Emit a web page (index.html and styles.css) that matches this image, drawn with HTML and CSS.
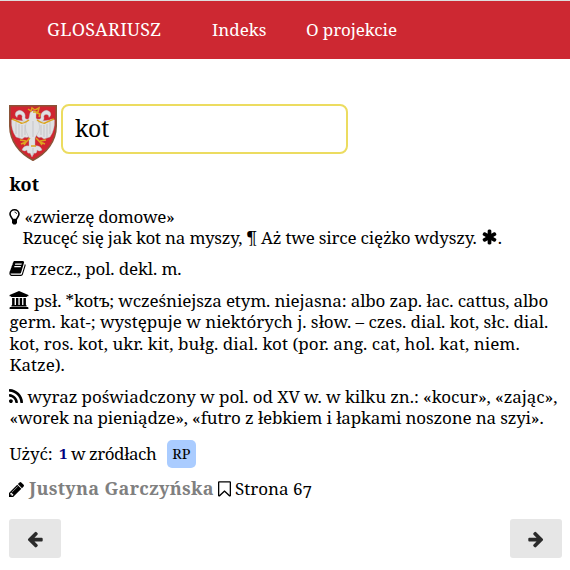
FILE: index.html
```
<!DOCTYPE html>
<html lang="pl">
<head>
<meta charset="utf-8">
<title>Glosariusz – kot</title>
<link rel="stylesheet" href="styles.css">
</head>
<body>
<nav class="nav"><a class="brand">GLOSARIUSZ</a><a class="index">Indeks</a><a class="about">O projekcie</a></nav>
<main>
  <div class="search">
    <svg class="crest" viewBox="0 0 48 56">
      <path d="M.8.8H47.2V21C47 36 38 48 24 55.2 10 48 1 36 .8 21Z" fill="#d12530" stroke="#8a5437" stroke-width="1.6"/>
      <g fill="#e0e1e3" stroke="#b5b5b8" stroke-width=".4">
        <path d="M21 17C17 19 13 17 13 13q1-4-3-3.500-2 .5-2 3Q5 10 7 7q3-3 6-1 4 2 3 7 1 2 5 1v15q-2 5-5 3l-3 2-3-1-3-1Q2 25 2.500 15q2-2 5 0ZM27 17c4 2 8 0 8-4q-1-4 3-3.500 2 .5 2 3 3-2.500 1-5.500-3-3-6-1-4 2-3 7-1 2-5 1v15q2 5 5 3l3 2 3-1 3-1Q46 25 45.500 15q-2-2-5 0Z"/>
        <path d="M21 8q1-3 5-2 2 1 1 4v3q5 6 3 13l-4 7v8q5-1 7 4-3 2-5 0 0 4-3 3l-2 4-2-4q-3 1-3-3-2 2-5 0 2-5 7-4v-8l-3-7q-2-7 3-13Z"/>
      </g>
      <path d="M7 17v12M10 19v14M13 20v12M16 20v10M41 17v12M38 19v14M35 20v12M32 20v10M24 16v16M24 43v7" fill="none" stroke="#b9babd" stroke-width=".7"/>
      <path d="m19 4 3 2 1-3 3 2 4-2-1 4-5 0M27 8l4 1-1 3M3 14q7 3 9 4t8-3M45 14q-7 3-9 4t-8-3M21 33l-4 4-5 2M17 36l-6-1M17 37l-2 3M27 33l4 4 5 2M31 36l6-1M31 37l2 3M22 41h5" fill="none" stroke="#dca51f" stroke-width="1.5"/>
    </svg>
    <input class="query" type="text" value="kot" aria-label="Szukaj">
  </div>

  <h1 class="word">kot</h1>

  <section class="entry">
    <div class="line l1"><svg class="i bulb" viewBox="0 0 11 16"><path d="M3.600 10.600C3.400 8.700 1 7.700 1 5.100a4.500 4.300 0 0 1 9 0c0 2.600-2.400 3.600-2.600 5.500" fill="none" stroke="#000" stroke-width="1.600"/><path d="M5.500 3q1.900.1 2.100 1.900" fill="none" stroke="#000" stroke-width=".8"/><path d="M3 9.800h5v4.100L6.600 15.600H4.400L3 13.900Z"/></svg>«zwierzę domowe»</div>
    <div class="line l2">Rzucęć się jak kot na myszy, ¶ Aż twe sirce ciężko wdyszy. <svg class="i star" viewBox="128 64 1536 1664"><path d="M1546 1050q46 26 59.500 77.500t-12.500 97.500l-64 110q-26 46-77.500 59.500t-97.500-12.500l-266-153v307q0 52-38 90t-90 38h-128q-52 0-90-38t-38-90v-307l-266 153q-46 26-97.500 12.500t-77.500-59.500l-64-110q-26-46-12.500-97.500t59.500-77.500l266-154-266-154q-46-26-59.500-77.500t12.500-97.500l64-110q26-46 77.500-59.500t97.500 12.500l266 153v-307q0-52 38-90t90-38h128q52 0 90 38t38 90v307l266-153q46-26 97.500-12.500t77.500 59.500l64 110q26 46 12.500 97.500t-59.500 77.500l-266 154z"/></svg>.</div>
  </section>

  <section class="entry">
    <div class="line l3"><svg class="i book" viewBox="64 128 1664 1536"><path d="M1703 478q40 57 18 129l-275 906q-19 64-76.500 107.500t-122.500 43.500h-923q-77 0-148.500-53.500t-99.500-131.500q-24-67-2-127 0-4 3-27t4-37q1-8-3-21.500t-3-19.500q2-11 8-21t16.500-23.500 16.500-23.500q23-38 45-91.500t30-91.500q3-10 .5-30t-.5-28q3-11 17-28t17-23q21-36 42-92t25-90q1-9-2.500-32t.5-28q4-13 22-30.500t22-22.500q19-26 42.500-84.500t27.500-96.500q1-8-3-25.500t-2-26.500q2-8 9-18t18-23 17-21q8-12 16.500-30.500t15-35 16-36 19.500-32 26.500-23.500 36-11.500 47.500 5.500l-1 3q38-9 51-9h761q74 0 114 56t18 130l-274 906q-36 119-71.500 153.500t-128.500 34.500h-869q-27 0-38 15-11 16-1 43 24 70 144 70h923q29 0 56-15.500t35-41.500l300-987q7-22 5-57 38 15 59 43zm-1064 2q-4 13 2 22.500t20 9.500h608q13 0 25.500-9.500t16.500-22.500l21-64q4-13-2-22.500t-20-9.500h-608q-13 0-25.500 9.500t-16.500 22.500zm-83 256q-4 13 2 22.500t20 9.500h608q13 0 25.500-9.500t16.500-22.500l21-64q4-13-2-22.500t-20-9.500h-608q-13 0-25.500 9.500t-16.500 22.500z"/></svg>rzecz., pol. dekl. m.</div>
  </section>

  <section class="entry">
    <div class="line l4"><svg class="i hall" viewBox="0 0 20 18"><path d="M10 0 19.400 4v1.300h-1.300q0 .6-.7.600H2.600q-.7 0-.7-.6H.6V4ZM3.100 7.100h2.500V14H7V7.100h2.400V14h1.300V7.100h2.400V14h1.300V7.100h2.500V14q.7 0 .7.700v.7H2.400v-.7q0-.7.700-.7ZM1.300 16h17.400q.7 0 .7.700v1.200H.6v-1.200q0-.7.700-.7Z"/></svg>psł. *kotъ; wcześniejsza etym. niejasna: albo zap. łac. cattus, albo</div>
    <div class="line l5">germ. kat-; występuje w niektórych j. słow. – czes. dial. kot, słc. dial.</div>
    <div class="line l6">kot, ros. kot, ukr. kit, bułg. dial. kot (por. ang. cat, hol. kat, niem.</div>
    <div class="line">Katze).</div>
  </section>

  <section class="entry">
    <div class="line l8"><svg class="i rss" viewBox="192 128 1408 1408"><path d="M576 1344q0 80-56 136t-136 56-136-56-56-136 56-136 136-56 136 56 56 136zm512 123q2 28-17 48-18 21-47 21h-135q-25 0-43-16.500t-20-41.500q-22-229-184.500-391.500t-391.500-184.500q-25-2-41.500-20t-16.500-43v-135q0-29 21-47 17-17 43-17h5q160 13 306 80.500t259 181.500q114 113 181.500 259t80.500 306zm512 2q2 27-18 47-18 20-46 20h-143q-26 0-44.500-17.500t-19.500-42.500q-12-215-101-408.500t-231.500-336-336-231.500-408.500-102q-25-1-42.500-19.500t-17.500-43.500v-143q0-28 20-46 18-18 44-18h3q262 13 501.500 120t425.500 294q187 186 294 425.500t120 501.500z"/></svg>wyraz poświadczony w pol. od XV w. w kilku zn.: «kocur», «zając»,</div>
    <div class="line l9">«worek na pieniądze», «futro z łebkiem i łapkami noszone na szyi».</div>
  </section>

  <div class="usage"><span class="used">Użyć:</span><b class="count">1</b><span class="sources">w zródłach</span><span class="tag">RP</span></div>

  <div class="credit">
    <svg class="i pencil" viewBox="128 149 1515 1515"><path d="M491 1536l91-91-235-235-91 91v107h128v128h107zm523-928q0-22-22-22-10 0-17 7l-542 542q-7 7-7 17 0 22 22 22 10 0 17-7l542-542q7-7 7-17zm-54-192l416 416-832 832h-416v-416zm683 96q0 53-37 90l-166 166-416-416 166-165q36-38 90-38 53 0 91 38l235 234q37 39 37 91z"/></svg>
    <b class="author">Justyna Garczyńska</b>
    <svg class="i mark" viewBox="256 128 1280 1536"><path d="M1408 256h-1024v1242l423-406 89-85 89 85 423 406v-1242zm12-128q23 0 44 9 33 13 52.500 41t19.500 62v1289q0 34-19.500 62t-52.500 41q-19 8-44 8-48 0-83-32l-441-424-441 424q-36 33-83 33-23 0-44-9-33-13-52.500-41t-19.500-62v-1289q0-34 19.500-62t52.500-41q21-9 44-9h1048z"/></svg>
    <span class="page">Strona 6<span class="low">7</span></span>
  </div>

  <div class="pager">
    <a class="btn"><svg viewBox="0 0 1792 1792"><path d="M1664 896v128q0 53-32.500 90.500t-84.500 37.500h-704l293 294q38 36 38 90t-38 90l-75 76q-37 37-90 37-52 0-91-37l-651-652q-37-37-37-90 0-52 37-91l651-650q38-38 91-38 52 0 90 38l75 74q38 38 38 91t-38 91l-293 293h704q52 0 84.500 37.500t32.500 90.500z"/></svg></a>
    <a class="btn"><svg viewBox="0 0 1792 1792"><path d="M1600 960q0 54-37 91l-651 651q-39 37-91 37-51 0-90-37l-75-75q-38-38-38-91t38-91l293-293h-704q-52 0-84.500-37.500t-32.500-90.500v-128q0-53 32.500-90.500t84.500-37.500h704l-293-294q-38-36-38-90t38-90l75-75q38-38 90-38 53 0 91 38l651 651q37 35 37 90z"/></svg></a>
  </div>
</main>
</body>
</html>
```
FILE: styles.css
```
* { box-sizing: border-box; }
body { margin: 0; background: #fff; color: #000; font: 17px/21.6px "Noto Serif", Georgia, "Liberation Serif", serif; }
.nav { display: flex; height: 59px; padding: 18px 0 0 47px; border-top: 1px solid #ddd; background: #cd2832; color: #fff; }
.brand { width: 165px; font-size: 18px; letter-spacing: .3px; }
.index { width: 94px; }
.about { letter-spacing: -.1px; }
main { padding: 45px 8px 0 9px; }
.search { display: flex; height: 50px; }
.crest { width: 48px; height: 56px; margin: 1px 4px 0 0; flex: none; }
.query { width: 287px; height: 50px; padding: 0 12px 2px; border: 2px solid #ecdc60; border-radius: 8px; font: 23px "Noto Serif", Georgia, serif; color: #000; background: #fff; outline: 0; }
.word { margin: 20.3px 0 10.2px; padding-left: .5px; font-size: 18px; line-height: 21.6px; }
.entry { margin-bottom: 9.8px; }
.line { white-space: nowrap; height: 21.6px; padding-left: .5px; }
.i { fill: #000; flex: none; }
.line .i { vertical-align: -1px; margin-left: -.5px; }
.bulb { width: 11px; height: 16px; margin-right: 4.5px; }
.line .bulb { vertical-align: -2px; }
.line .star { width: 15px; height: 16px; margin-left: 1px; margin-right: 1px; }
.book { width: 17px; height: 15px; margin-right: 4.5px; }
.hall { width: 20px; height: 18px; margin-right: 5px; }
.line .hall { vertical-align: -2px; }
.rss { width: 14px; height: 14px; margin-right: 4.5px; }
.line .rss { vertical-align: 0; }
.l1 { letter-spacing: -.35px; }
.l2 { letter-spacing: -.2px; padding-left: 13.5px; margin-top: -.8px; margin-bottom: .8px; }
.l3 { letter-spacing: -.13px; }
.l4 { letter-spacing: -.14px; }
.l5 { letter-spacing: -.05px; }
.l6 { letter-spacing: .04px; }
.l8 { letter-spacing: -.08px; }
.l9 { letter-spacing: -.165px; }
.usage { display: flex; align-items: center; height: 28px; margin-top: 11px; white-space: nowrap; }
.used { width: 50px; padding-left: .5px; letter-spacing: -.14px; }
.count { width: 12px; font-size: 15px; color: #000080; }
.sources { width: 96px; letter-spacing: -.5px; }
.tag { width: 29px; height: 28px; border-radius: 5px; background: #aaccff; font-size: 14.5px; line-height: 27px; text-align: center; }
.credit { display: flex; align-items: center; height: 22px; margin-top: 10px; white-space: nowrap; }
.pencil { width: 15px; height: 15px; margin-right: 5px; }
.author { width: 189px; color: #808080; font-size: 18px; letter-spacing: .3px; }
.mark { width: 13px; height: 16px; margin-right: 4px; }
.low { position: relative; top: 3px; }
.pager { display: flex; justify-content: space-between; margin-top: 19px; }
.btn { display: flex; align-items: center; justify-content: center; width: 52px; height: 39px; border-radius: 3px; background: #e6e6e6; }
.btn svg { width: 18px; height: 18px; fill: #2b2b2b; }
```
